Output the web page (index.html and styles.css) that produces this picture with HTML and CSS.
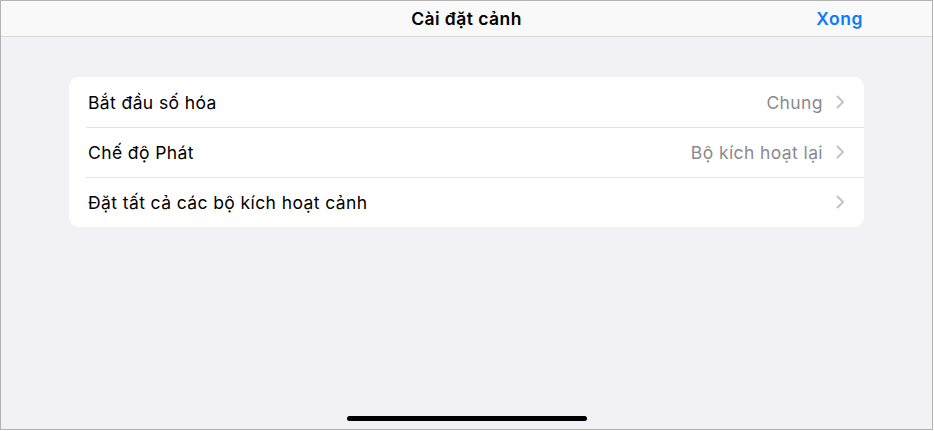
FILE: index.html
```html
<!DOCTYPE html>
<html lang="vi">
<head>
<meta charset="utf-8">
<link rel="stylesheet" href="styles.css">
</head>
<body>
<div class="frame">
  <header class="navbar">
    <div class="nav-title">Cài đặt cảnh</div>
    <div class="nav-done">Xong</div>
  </header>
  <main class="content">
    <section class="card">
      <div class="row">
        <span class="label">Bắt đầu số hóa</span>
        <span class="value">Chung</span>
        <svg class="chev" width="9" height="14" viewBox="0 0 9 14"><path d="M1.5 1.5 L7 7 L1.5 12.5" fill="none" stroke="#c4c4c7" stroke-width="2" stroke-linecap="round" stroke-linejoin="round"/></svg>
      </div>
      <div class="row">
        <span class="label">Chế độ Phát</span>
        <span class="value">Bộ kích hoạt lại</span>
        <svg class="chev" width="9" height="14" viewBox="0 0 9 14"><path d="M1.5 1.5 L7 7 L1.5 12.5" fill="none" stroke="#c4c4c7" stroke-width="2" stroke-linecap="round" stroke-linejoin="round"/></svg>
      </div>
      <div class="row">
        <span class="label">Đặt tất cả các bộ kích hoạt cảnh</span>
        <span class="value"></span>
        <svg class="chev" width="9" height="14" viewBox="0 0 9 14"><path d="M1.5 1.5 L7 7 L1.5 12.5" fill="none" stroke="#c4c4c7" stroke-width="2" stroke-linecap="round" stroke-linejoin="round"/></svg>
      </div>
    </section>
    <div class="spacer"></div>
    <div class="home-indicator"></div>
  </main>
</div>
</body>
</html>
```

FILE: styles.css
```css
* { box-sizing: border-box; }
html, body { margin: 0; padding: 0; background: #ffffff; }
body {
  font-family: Inter, "Noto Sans", "Liberation Sans", sans-serif;
  -webkit-font-smoothing: antialiased;
}
.frame {
  width: 933px;
  height: 430px;
  border: 1px solid #b3b3b3;
  background: #f2f1f6;
  display: flex;
  flex-direction: column;
  overflow: hidden;
}
.navbar {
  height: 36px;
  flex: 0 0 36px;
  background: #f9f9f9;
  border-bottom: 1px solid #d9d9dc;
  display: flex;
  align-items: center;
  justify-content: center;
  position: relative;
}
.nav-title {
  font-size: 17.5px;
  font-weight: 600;
  color: #000;
  letter-spacing: 0.45px;
}
.nav-done {
  position: absolute;
  right: 69px;
  top: 0;
  height: 35px;
  display: flex;
  align-items: center;
  font-size: 17.5px;
  font-weight: 600;
  color: #0a7aff;
  letter-spacing: 0.6px;
}
.content {
  flex: 1;
  display: flex;
  flex-direction: column;
  padding: 40px 68px 8px 68px;
}
.card {
  background: #fff;
  border-radius: 10px;
  overflow: hidden;
}
.row {
  height: 50px;
  display: flex;
  align-items: center;
  padding: 0 19px 0 19px;
  position: relative;
  font-size: 17.5px;
  letter-spacing: 0.4px;
}
.row + .row::before {
  content: "";
  position: absolute;
  left: 17px;
  right: 0;
  top: 0;
  height: 1px;
  background: #e3e3e6;
}
.label { color: #000; flex: 1; }
.value { color: #8a8a8e; margin-right: 13px; }
.chev { flex: 0 0 auto; display: block; }
.spacer { flex: 1; }
.home-indicator {
  align-self: center;
  width: 240px;
  height: 5px;
  border-radius: 3px;
  background: #000;
}
```
